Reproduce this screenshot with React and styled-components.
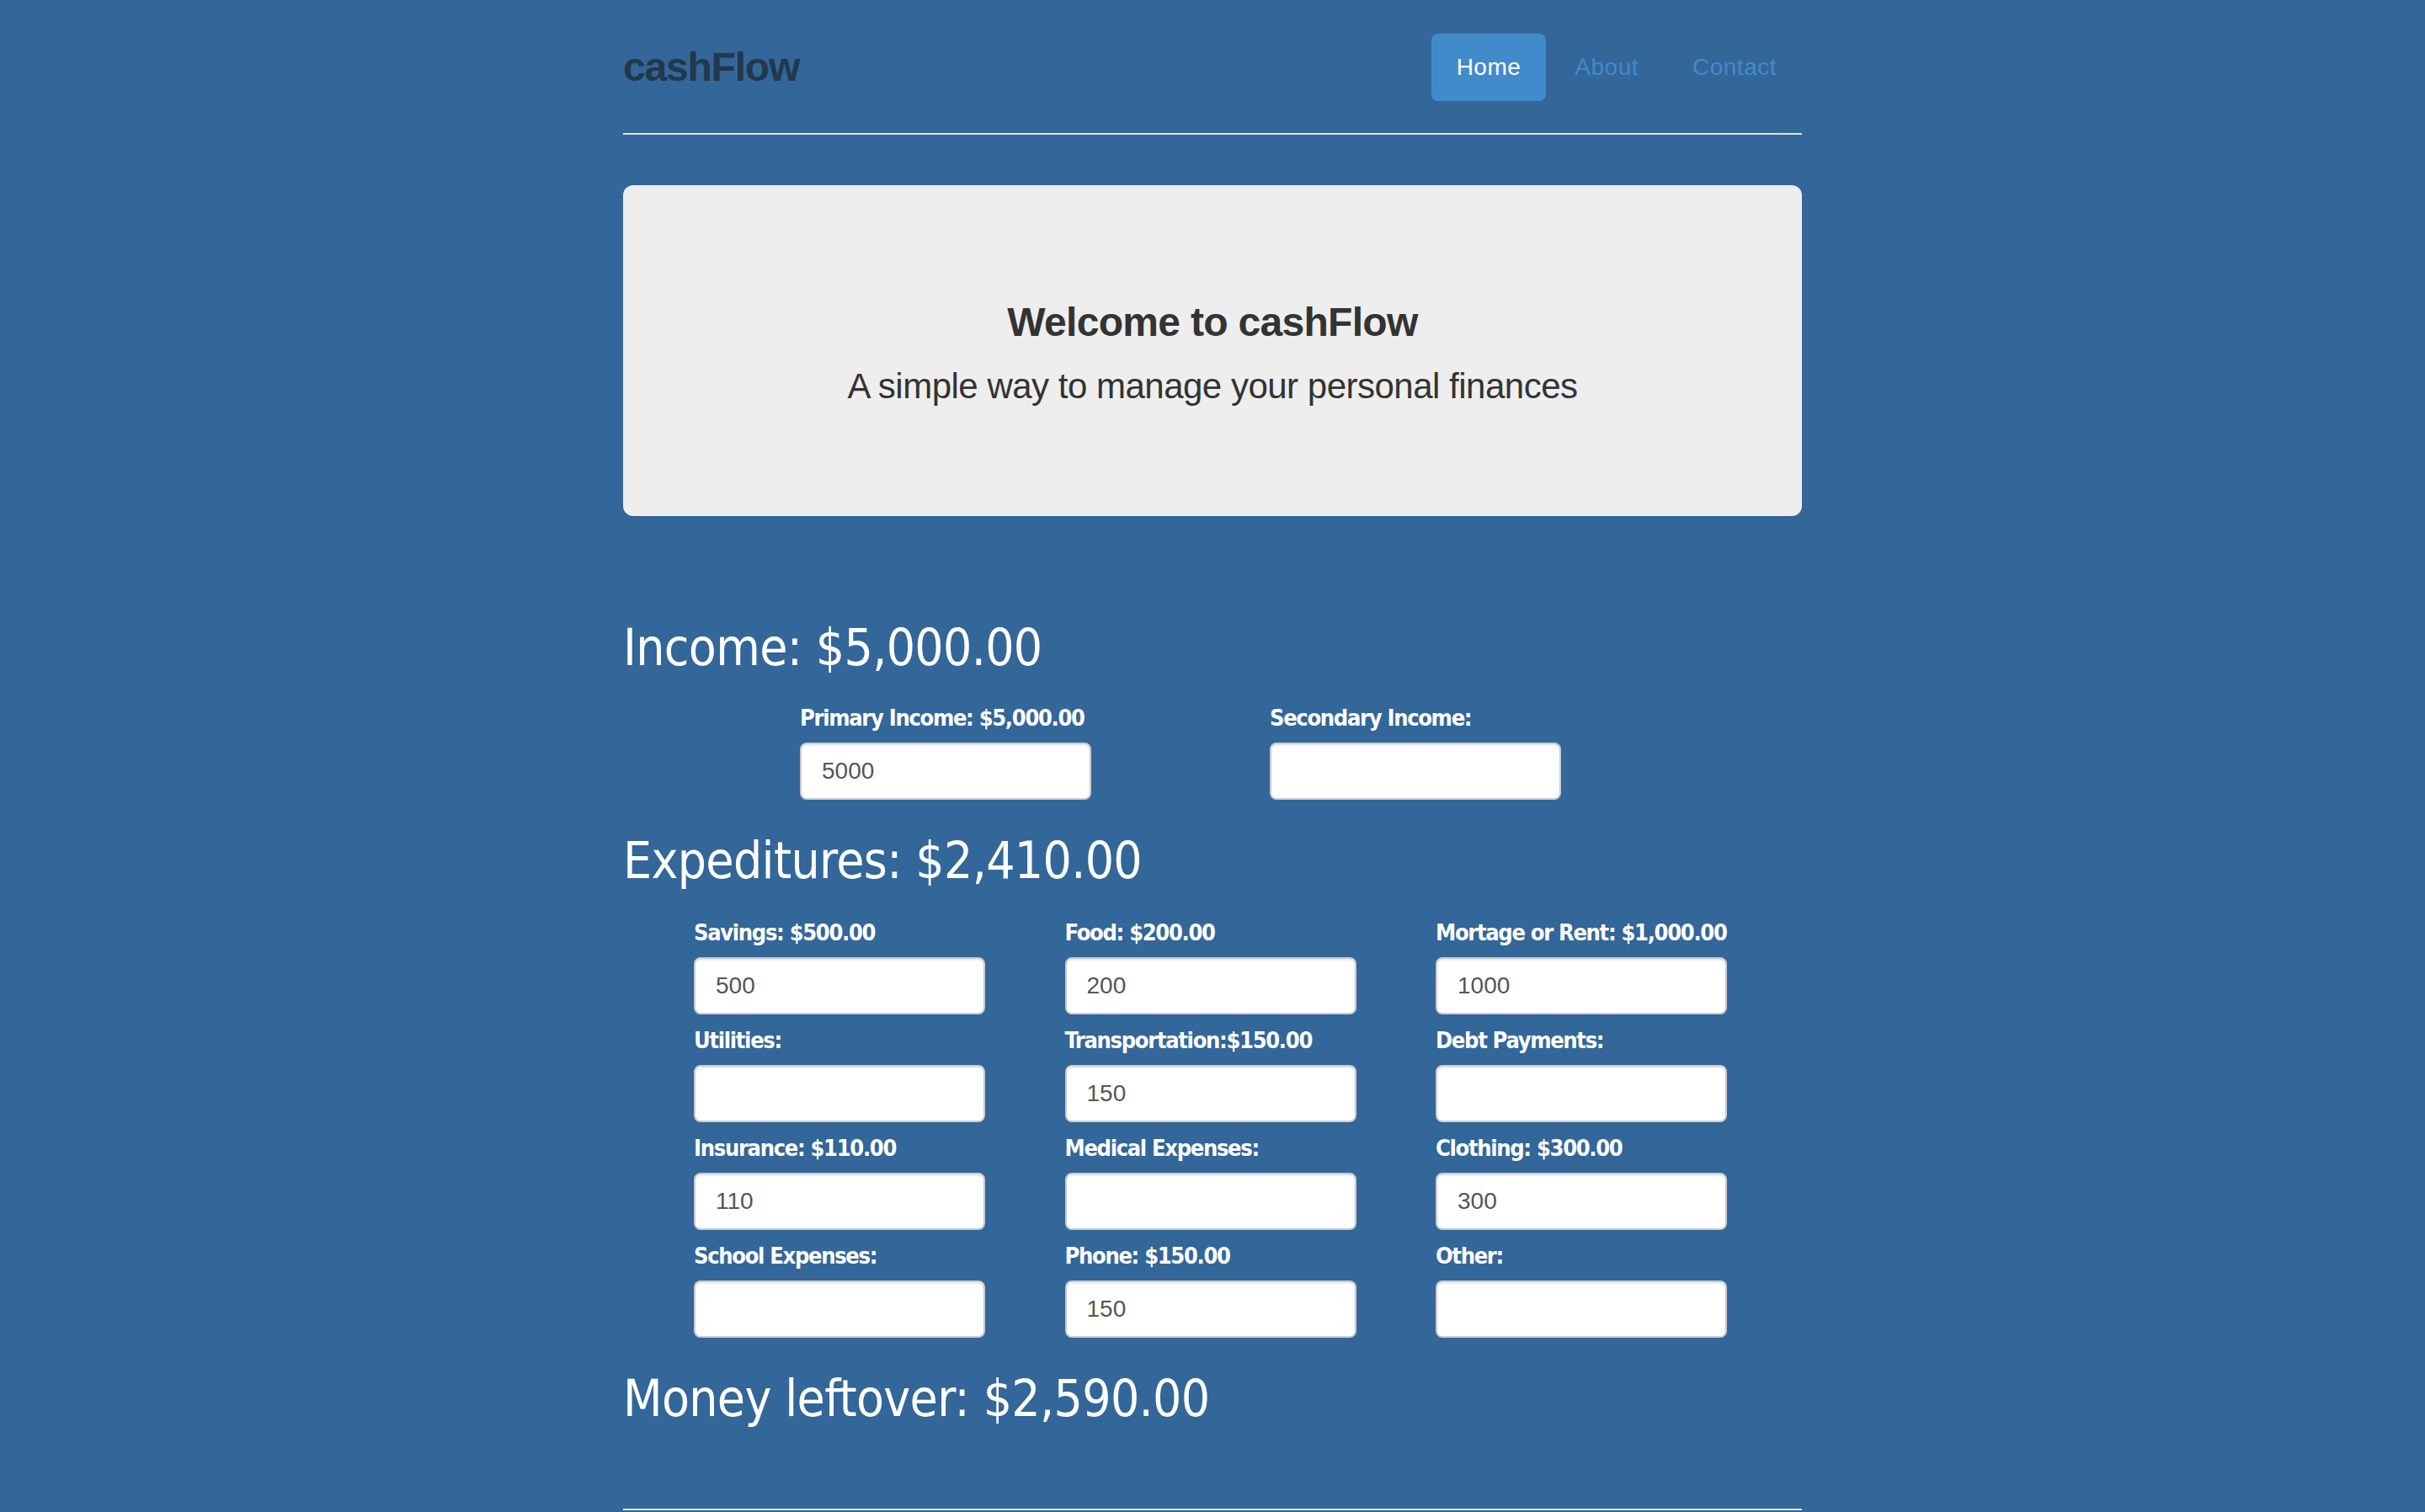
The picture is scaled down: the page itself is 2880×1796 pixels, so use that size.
import React, { useState } from "react";
import styled, { createGlobalStyle } from "styled-components";

const GlobalStyle = createGlobalStyle`
  html, body { margin: 0; padding: 0; }
  body {
    background: #336699;
    padding: 40px 0 40px;
    font-family: "Liberation Sans", Arial, sans-serif;
  }
  * { box-sizing: border-box; }
`;

const Container = styled.div`
  width: 1400px;
  margin: 0 auto;
`;

const Header = styled.header`
  display: flex;
  justify-content: space-between;
  align-items: flex-start;
  padding-bottom: 38px;
  border-bottom: 2px solid #e5e5e5;
  margin-bottom: 60px;
`;

const Logo = styled.h3`
  margin: 0;
  font-family: "Liberation Sans", Arial, sans-serif;
  font-size: 48px;
  line-height: 80px;
  font-weight: 700;
  letter-spacing: -1.2px;
  color: #23374d;
`;

const Nav = styled.ul`
  display: flex;
  gap: 4px;
  list-style: none;
  margin: 0;
  padding: 0;
`;

const NavLink = styled.a`
  display: block;
  padding: 20px 30px;
  font-size: 28px;
  line-height: 40px;
  letter-spacing: 0.5px;
  border-radius: 8px;
  text-decoration: none;
  color: ${(p) => (p.$active ? "#ffffff" : "#428bca")};
  background: ${(p) => (p.$active ? "#428bca" : "transparent")};
`;

const Jumbotron = styled.section`
  background: #eeeeee;
  border-radius: 12px;
  padding: 96px 120px 94px;
  text-align: center;
  color: #333333;
`;

const JumboTitle = styled.h3`
  margin: 40px 0 20px;
  font-size: 48px;
  line-height: 53px;
  font-weight: 700;
  letter-spacing: -0.7px;
`;

const Lead = styled.p`
  margin: 0 0 30px;
  font-size: 42px;
  line-height: 60px;
  font-weight: 300;
  letter-spacing: -0.5px;
`;

const SectionTitle = styled.h2`
  margin: ${(p) => p.$top}px 0 0;
  font-family: "DejaVu Sans Condensed", "DejaVu Sans", Tahoma, sans-serif;
  font-stretch: condensed;
  font-size: 60px;
  line-height: 66px;
  font-weight: 400;
  letter-spacing: -0.65px;
  color: #ffffff;
`;

const FieldGrid = styled.div`
  display: grid;
  grid-template-columns: repeat(${(p) => p.$cols}, 346px);
  column-gap: ${(p) => p.$gap}px;
  row-gap: 11px;
  padding-left: ${(p) => p.$indent}px;
  margin-top: ${(p) => p.$top}px;
`;

const Field = styled.div`
  display: flex;
  flex-direction: column;
`;

const Label = styled.label`
  display: block;
  margin-bottom: 9px;
  font-family: "DejaVu Sans Condensed", "DejaVu Sans", Tahoma, sans-serif;
  font-stretch: condensed;
  font-size: 27px;
  line-height: 40px;
  font-weight: 700;
  letter-spacing: -1.3px;
  color: #ffffff;
  white-space: nowrap;
`;

const Input = styled.input`
  width: 346px;
  height: 68px;
  padding: 0 24px;
  border: 2px solid #cccccc;
  border-radius: 8px;
  background: #ffffff;
  box-shadow: inset 0 2px 2px rgba(0, 0, 0, 0.075);
  font-family: "Liberation Sans", Arial, sans-serif;
  font-size: 28px;
  color: #555555;
  outline: none;
`;

const Footer = styled.footer`
  margin-top: 98px;
  border-top: 2px solid #e5e5e5;
  padding-top: 38px;
  min-height: 80px;
`;

const money = (n) =>
  "$" +
  n.toLocaleString("en-US", { minimumFractionDigits: 2, maximumFractionDigits: 2 });

const incomeFields = [
  { key: "primary", label: "Primary Income:", sep: " " },
  { key: "secondary", label: "Secondary Income:", sep: " " },
];

const expenseFields = [
  { key: "savings", label: "Savings:", sep: " " },
  { key: "food", label: "Food:", sep: " " },
  { key: "rent", label: "Mortage or Rent:", sep: " " },
  { key: "utilities", label: "Utilities:", sep: " " },
  { key: "transport", label: "Transportation:", sep: "" },
  { key: "debt", label: "Debt Payments:", sep: " " },
  { key: "insurance", label: "Insurance:", sep: " " },
  { key: "medical", label: "Medical Expenses:", sep: " " },
  { key: "clothing", label: "Clothing:", sep: " " },
  { key: "school", label: "School Expenses:", sep: " " },
  { key: "phone", label: "Phone:", sep: " " },
  { key: "other", label: "Other:", sep: " " },
];

const initial = {
  primary: "5000",
  secondary: "",
  savings: "500",
  food: "200",
  rent: "1000",
  utilities: "",
  transport: "150",
  debt: "",
  insurance: "110",
  medical: "",
  clothing: "300",
  school: "",
  phone: "150",
  other: "",
};

const num = (v) => {
  const n = parseFloat(v);
  return isNaN(n) ? 0 : n;
};

function MoneyField({ field, value, onChange }) {
  const shown = value !== "" ? field.sep + money(num(value)) : "";
  return (
    <Field>
      <Label htmlFor={field.key}>
        {field.label}
        {shown}
      </Label>
      <Input
        id={field.key}
        type="text"
        value={value}
        onChange={(e) => onChange(field.key, e.target.value)}
      />
    </Field>
  );
}

export default function App() {
  const [values, setValues] = useState(initial);
  const update = (k, v) => setValues((s) => ({ ...s, [k]: v }));

  const income = incomeFields.reduce((a, f) => a + num(values[f.key]), 0);
  const expenses = expenseFields.reduce((a, f) => a + num(values[f.key]), 0);

  return (
    <>
      <GlobalStyle />
      <Container>
        <Header>
          <Logo>cashFlow</Logo>
          <Nav>
            <li>
              <NavLink href="#" $active>
                Home
              </NavLink>
            </li>
            <li>
              <NavLink href="#">About</NavLink>
            </li>
            <li>
              <NavLink href="#">Contact</NavLink>
            </li>
          </Nav>
        </Header>

        <Jumbotron>
          <JumboTitle>Welcome to cashFlow</JumboTitle>
          <Lead>A simple way to manage your personal finances</Lead>
        </Jumbotron>

        <SectionTitle $top={123}>Income: {money(income)}</SectionTitle>
        <FieldGrid $cols={2} $gap={212} $indent={210} $top={31}>
          {incomeFields.map((f) => (
            <MoneyField key={f.key} field={f} value={values[f.key]} onChange={update} />
          ))}
        </FieldGrid>

        <SectionTitle $top={39}>Expeditures: {money(expenses)}</SectionTitle>
        <FieldGrid $cols={3} $gap={94.5} $indent={84} $top={33}>
          {expenseFields.map((f) => (
            <MoneyField key={f.key} field={f} value={values[f.key]} onChange={update} />
          ))}
        </FieldGrid>

        <SectionTitle $top={39}>Money leftover: {money(income - expenses)}</SectionTitle>

        <Footer />
      </Container>
    </>
  );
}
